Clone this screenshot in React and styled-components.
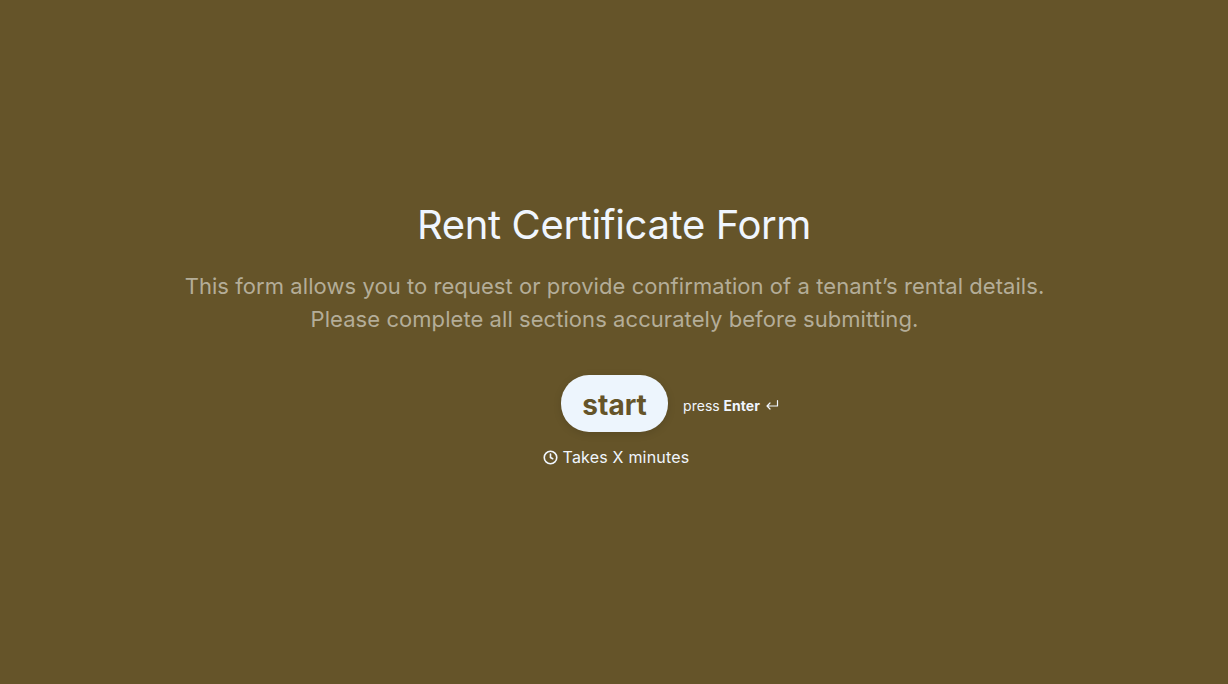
import React from "react";
import styled, { createGlobalStyle } from "styled-components";

const Global = createGlobalStyle`
  html, body { margin: 0; padding: 0; height: 100%; background: #655429; }
  #root { height: 100%; }
  * { box-sizing: border-box; }
`;
const Page = styled.main`
  height: 684px;
  background: #655429;
  display: flex;
  flex-direction: column;
  align-items: center;
  justify-content: center;
  font-family: Inter, "Liberation Sans", sans-serif;
  padding-bottom: 14px;
`;
const Title = styled.h1`
  margin: 0 0 21px;
  font-size: 40px;
  line-height: 48px;
  font-weight: 400;
  letter-spacing: -0.36px;
  color: #f0f6fe;
  text-align: center;
`;
const Description = styled.p`
  margin: 0 0 39px;
  padding-left: 1px;
  font-size: 22px;
  line-height: 33px;
  font-weight: 400;
  letter-spacing: 0.06px;
  color: #b4ad98;
  text-align: center;
`;
const Actions = styled.div`
  display: flex;
  align-items: center;
  gap: 15px;
  padding-left: 108px;
  margin-left: 4px;
`;
const StartButton = styled.button`
  width: 107px;
  height: 57px;
  padding: 2px 0 0;
  border: none;
  border-radius: 28px;
  background: #edf5fd;
  color: #655429;
  font: 700 28px Inter, "Liberation Sans", sans-serif;
  box-shadow: 0 2px 8px rgba(0, 0, 0, 0.12);
`;
const Hint = styled.span`
  display: flex;
  align-items: center;
  gap: 5px;
  padding-top: 4px;
  font-size: 14px;
  color: #f0f6fe;
  b { font-weight: 700; }
`;
const Duration = styled.div`
  display: flex;
  align-items: center;
  gap: 5px;
  margin: 13px 0 0 4px;
  font-size: 16px;
  line-height: 24px;
  letter-spacing: 0.2px;
  color: #f0f6fe;
`;
const Icon = styled.svg`
  width: ${(p) => p.$size}px;
  height: ${(p) => p.$size}px;
  fill: none;
  stroke: currentColor;
  stroke-width: ${(p) => p.$stroke};
  stroke-linecap: round;
  stroke-linejoin: round;
`;

export default function App() {
  return (
    <Page>
      <Global />
      <Title>Rent Certificate Form</Title>
      <Description>
        This form allows you to request or provide confirmation of a tenant’s rental details.
        <br />
        Please complete all sections accurately before submitting.
      </Description>
      <Actions>
        <StartButton>start</StartButton>
        <Hint>
          <span>press <b>Enter</b></span>
          <Icon $size={14} $stroke={1.2} viewBox="0 0 14 14">
            <path d="M12.5 1.5v5.5H2M5 4 2 7l3 3" />
          </Icon>
        </Hint>
      </Actions>
      <Duration>
        <Icon $size={15} $stroke={2.6} viewBox="0 0 24 24">
          <circle cx="12" cy="12" r="10" />
          <path d="M12 6.5V12l3.5 2" />
        </Icon>
        Takes X minutes
      </Duration>
    </Page>
  );
}
